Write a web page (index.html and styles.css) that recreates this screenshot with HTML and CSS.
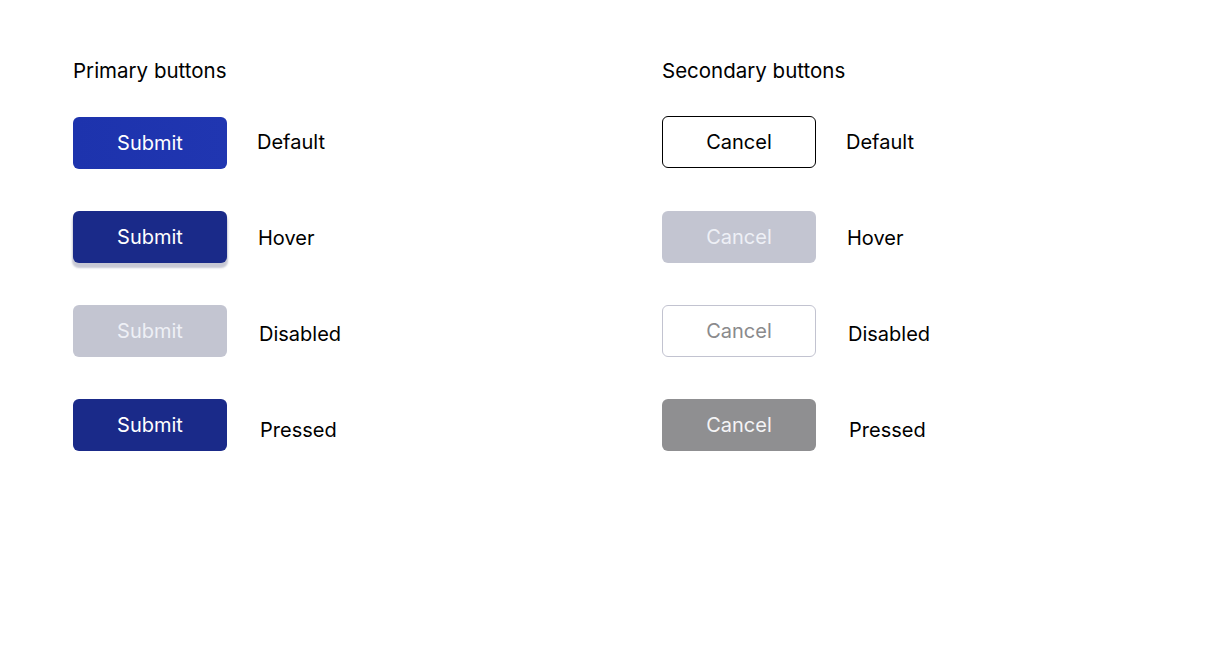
FILE: index.html
```html
<!DOCTYPE html>
<html>
<head>
<meta charset="utf-8">
<link rel="stylesheet" href="styles.css">
</head>
<body>
<main class="page">
  <section class="col">
    <h2 class="title">Primary buttons</h2>
    <div class="rows">
      <div class="row"><button class="btn p-default">Submit</button><span class="label l1">Default</span></div>
      <div class="row"><button class="btn p-hover">Submit</button><span class="label l2">Hover</span></div>
      <div class="row"><button class="btn p-disabled">Submit</button><span class="label l3">Disabled</span></div>
      <div class="row"><button class="btn p-pressed">Submit</button><span class="label l4">Pressed</span></div>
    </div>
  </section>
  <section class="col">
    <h2 class="title">Secondary buttons</h2>
    <div class="rows">
      <div class="row"><button class="btn s-default">Cancel</button><span class="label l1">Default</span></div>
      <div class="row"><button class="btn s-hover">Cancel</button><span class="label l2">Hover</span></div>
      <div class="row"><button class="btn s-disabled">Cancel</button><span class="label l3">Disabled</span></div>
      <div class="row"><button class="btn s-pressed">Cancel</button><span class="label l4">Pressed</span></div>
    </div>
  </section>
</main>
</body>
</html>
```
FILE: styles.css
```css
html, body {
  margin: 0;
  padding: 0;
  background: #ffffff;
}
body {
  font-family: Inter, "Noto Sans", sans-serif;
  color: #000000;
}
.page {
  display: grid;
  grid-template-columns: 589px 1fr;
  padding: 59px 0 0 73px;
}
.title {
  margin: 0;
  font-size: 20.5px;
  font-weight: 400;
  line-height: 24px;
  height: 24px;
}
.rows {
  display: flex;
  flex-direction: column;
  gap: 42px;
  margin-top: 34px;
}
.row {
  display: flex;
  align-items: center;
  height: 52px;
}
.btn {
  box-sizing: border-box;
  width: 154px;
  height: 52px;
  border-radius: 6px;
  border: none;
  font-family: Inter, "Noto Sans", sans-serif;
  font-size: 20px;
  font-weight: 400;
  padding: 0;
  color: #ffffff;
  flex: none;
}
.label {
  font-size: 20px;
  font-weight: 400;
  line-height: 24px;
}
.l1 { margin-left: 30px; margin-top: -2px; }
.l2 { margin-left: 31px; margin-top: 2px; }
.l3 { margin-left: 32px; margin-top: 6px; }
.l4 { margin-left: 33px; margin-top: 10px; }

.p-default { background: linear-gradient(90deg, #1d33ad, #2036b1); }
.p-hover {
  background: #1a2a89;
  box-shadow: 0 4px 2px 1px rgba(130, 132, 160, 0.45);
}
.p-disabled { background: #c3c5d1; color: #eef0f6; }
.p-pressed { background: #1a2a89; }

.s-default {
  background: #ffffff;
  color: #000000;
  border: 1px solid #000000;
  position: relative;
  top: -1px;
}
.s-hover { background: #c3c5d1; color: #eef0f6; }
.s-disabled {
  background: #ffffff;
  color: #8a8a8c;
  border: 1px solid #c2c3d0;
}
.s-pressed { background: #8f8f91; color: #f4f4f6; }
```
